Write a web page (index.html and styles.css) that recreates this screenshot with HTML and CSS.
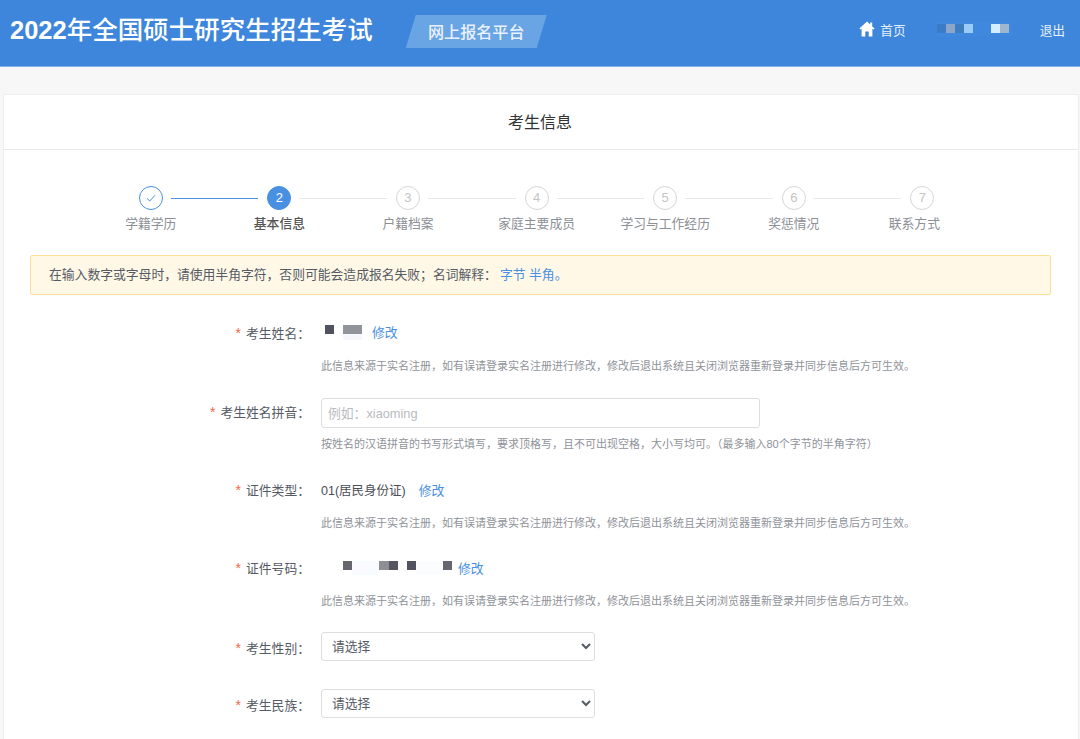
FILE: index.html
```html
<!DOCTYPE html>
<html lang="zh-CN">
<head>
<meta charset="utf-8">
<title>考生信息</title>
<link rel="stylesheet" href="styles.css">
</head>
<body>
<header class="topbar">
  <h1 class="brand"><span class="brand-year">2022</span>年全国硕士研究生招生考试</h1>
  <div class="platform">网上报名平台</div>
  <nav class="topnav">
    <a class="home">
      <svg class="home-icon" viewBox="0 0 16 16" width="16" height="16"><path d="M8 0.6 0.4 7.6 1.5 8.6 2.6 7.7V15.4H6.3V10.4H9.7V15.4H13.4V7.7L14.5 8.6 15.6 7.6 13.2 5.4V1.6H11.2V3.5Z" fill="#fff"/></svg>
      <span>首页</span>
    </a>
    <div class="user-mask">
      <i class="px a"></i><i class="px b"></i><i class="px c"></i><i class="px d"></i><i class="px e"></i><i class="px f"></i><i class="px g"></i><i class="px h"></i>
    </div>
    <a class="logout">退出</a>
  </nav>
</header>

<main class="card">
  <div class="card-title">考生信息</div>
  <div class="card-body">
    <ol class="steps">
      <li class="step done"><span class="dot"><svg viewBox="0 0 12 12" width="12" height="12"><path d="M2 6.4 4.8 9 10 3.2" fill="none" stroke="#4a90e2" stroke-width="1"/></svg></span><span class="step-name">学籍学历</span></li>
      <li class="step active"><span class="dot">2</span><span class="step-name">基本信息</span></li>
      <li class="step"><span class="dot">3</span><span class="step-name">户籍档案</span></li>
      <li class="step"><span class="dot">4</span><span class="step-name">家庭主要成员</span></li>
      <li class="step"><span class="dot">5</span><span class="step-name">学习与工作经历</span></li>
      <li class="step"><span class="dot">6</span><span class="step-name">奖惩情况</span></li>
      <li class="step last"><span class="dot">7</span><span class="step-name">联系方式</span></li>
    </ol>

    <div class="notice">在输入数字或字母时，请使用半角字符，否则可能会造成报名失败；名词解释：<a class="link term">字节 半角</a><span class="link-end">。</span></div>

    <form class="form">
      <div class="row row-name">
        <label class="label"><em>*</em>考生姓名：</label>
        <div class="field">
          <div class="value">
            <span class="mask mask-name"><i class="sq dark"></i><i class="gap10"></i><i class="sq mid wide"></i></span>
            <a class="link">修改</a>
          </div>
          <p class="hint">此信息来源于实名注册，如有误请登录实名注册进行修改，修改后退出系统且关闭浏览器重新登录并同步信息后方可生效。</p>
        </div>
      </div>

      <div class="row row-pinyin">
        <label class="label"><em>*</em>考生姓名拼音：</label>
        <div class="field">
          <input class="input" type="text" placeholder="例如：xiaoming">
          <p class="hint hint-tight">按姓名的汉语拼音的书写形式填写，要求顶格写，且不可出现空格，大小写均可。（最多输入80个字节的半角字符）</p>
        </div>
      </div>

      <div class="row row-type">
        <label class="label"><em>*</em>证件类型：</label>
        <div class="field">
          <div class="value"><span class="plain">01(居民身份证)</span><a class="link">修改</a></div>
          <p class="hint hint-near">此信息来源于实名注册，如有误请登录实名注册进行修改，修改后退出系统且关闭浏览器重新登录并同步信息后方可生效。</p>
        </div>
      </div>

      <div class="row row-id">
        <label class="label"><em>*</em>证件号码：</label>
        <div class="field">
          <div class="value">
            <span class="mask mask-id"><i class="sq mid2"></i><i class="gap-a"></i><i class="sq mid wide2"></i><i class="gap-b"></i><i class="sq dark"></i><i class="gap-c"></i><i class="sq mid2"></i></span>
            <a class="link">修改</a>
          </div>
          <p class="hint hint-near">此信息来源于实名注册，如有误请登录实名注册进行修改，修改后退出系统且关闭浏览器重新登录并同步信息后方可生效。</p>
        </div>
      </div>

      <div class="row row-sex">
        <label class="label"><em>*</em>考生性别：</label>
        <div class="field"><select class="select"><option>请选择</option></select></div>
      </div>

      <div class="row row-nation">
        <label class="label"><em>*</em>考生民族：</label>
        <div class="field"><select class="select"><option>请选择</option></select></div>
      </div>
    </form>
  </div>
</main>
</body>
</html>
```

FILE: styles.css
```css
* { box-sizing: border-box; }
html, body { height: 739px; overflow: hidden; }
body {
  margin: 0;
  background: #f7f7f7;
  color: #555a64;
  font-family: "Liberation Sans", "Noto Sans CJK SC", sans-serif;
  font-size: 12.8px;
}
a { color: inherit; text-decoration: none; }

.topbar {
  height: 67px;
  background: #3d86db;
  border-bottom: 1px solid #82b3ea;
  display: flex;
  align-items: center;
  padding: 0 15px 5px 10px;
  color: #fff;
}
.brand { margin: 0 0 2px; font-size: 25.5px; font-weight: 500; line-height: 34px; white-space: nowrap; }
.brand-year { font-weight: 700; }
.platform {
  margin: 2px 0 0 33px;
  width: 141px;
  height: 33px;
  line-height: 34px;
  text-align: center;
  background: #69a4e4;
  clip-path: polygon(10px 0, 100% 0, 131px 100%, 0 100%);
  font-size: 16.1px;
  font-weight: 500;
  color: #e9f2fc;
}
.topnav { margin: 0 0 3px auto; display: flex; align-items: center; font-size: 12.7px; color: #e6f0fb; }
.home { display: flex; align-items: center; gap: 5px; }
.home-icon { display: block; margin-top: -1px; }
.user-mask {
  display: flex;
  margin: 0 28px 0 31px;
  width: 75px;
  height: 14px;
  background: #3e88dd;
}
.px { display: block; width: 9px; height: 9px; margin-top: 2px; }
.px.a { background: #3a7cc9; }
.px.b { background: #8ba6c8; }
.px.c { background: #3c7dbf; }
.px.d { background: #9accfb; }
.px.e { background: #3e88dd; }
.px.f { background: #3e88dd; }
.px.g { background: #d4edff; }
.px.h { background: #9fb6d0; }

.card {
  margin: 27px 1px 0 3px;
  background: #fff;
  border: 1px solid #eeeeee;
  border-bottom: 0;
  border-radius: 2px 2px 0 0;
}
.card-title {
  height: 55px;
  line-height: 55px;
  padding-right: 2px;
  text-align: center;
  font-size: 16px;
  color: #333;
  border-bottom: 1px solid #e8e8e8;
}
.card-body { padding: 36px 27px 10px 26px; }

.steps {
  list-style: none;
  margin: 0 0 0 56.5px;
  padding: 0;
  display: grid;
  grid-template-columns: repeat(7, 128.6px);
  height: 69px;
}
.step { position: relative; display: flex; flex-direction: column; align-items: center; color: #8c8f96; }
.dot {
  width: 24px;
  height: 24px;
  border-radius: 50%;
  border: 1px solid #d6d6d6;
  color: #c4c4c4;
  font-size: 13px;
  line-height: 22px;
  text-align: center;
  background: #fff;
  display: flex;
  align-items: center;
  justify-content: center;
}
.step + .step::before {
  content: "";
  position: absolute;
  top: 12px;
  left: -44.3px;
  width: 87.6px;
  height: 1px;
  background: #e8e8e8;
}
.step.active::before { background: #4a90e2; }
.step.done .dot { border-color: #4a90e2; }
.step.active .dot { background: #4a90e2; border-color: #4a90e2; color: #fff; }
.step.active .step-name { color: #555; font-weight: 500; }
.step-name { margin-top: 5px; line-height: 18px; white-space: nowrap; }
.step.last .step-name { margin-right: 16px; }

.notice {
  height: 40px;
  line-height: 38px;
  padding-left: 18px;
  background: #fff8e7;
  border: 1px solid #fbe09c;
  border-radius: 2px;
  color: #555a64;
}
.link { color: #4a90e2; }
.term { margin-left: 3px; }
.link-end { color: #4a90e2; }

.form { display: flex; flex-direction: column; }
.row { display: flex; }
.row-name { margin-top: 28px; height: 75px; }
.row-pinyin { height: 83px; }
.row-type { height: 78px; }
.row-id { height: 73px; }
.row-sex { height: 57px; }
.row-nation { height: 50px; }

.label {
  width: 280px;
  flex: none;
  text-align: right;
  line-height: 20px;
  white-space: nowrap;
}
.label em { color: #ee6a4a; font-style: normal; font-size: 14px; margin-right: 5px; }
.row-pinyin .label { padding-top: 4px; }
.row-type .label, .row-id .label { line-height: 18px; }
.row-sex .label, .row-nation .label { padding-top: 6px; }
.field { margin-left: 11px; flex: 1; min-width: 0; }
.value { display: flex; align-items: center; height: 16px; }
.plain { margin-right: 13px; font-size: 12.5px; color: #4a4d55; }
.mask { display: flex; align-items: flex-start; height: 16px; }
.mask i { display: block; flex: none; }
.mask-name { width: 51px; padding-left: 4px; }
.mask-id { width: 137px; padding-left: 22px; }
.sq { width: 9px; height: 9px; margin-top: 2px; }
.dark { background: #50525f; }
.mid { background: #92949b; box-shadow: 0 6px 0 #f5f7fb; }
.mid2 { background: #666670; }
.wide { width: 19px; }
.wide2 { width: 19px; background: linear-gradient(90deg, #8d8e96 50%, #55565f 50%); box-shadow: none; }
.gap10 { width: 9px; }
.gap-a { width: 27px; height: 14px; margin-top: 2px; background: #f7fafe; }
.gap-b { width: 9px; }
.gap-c { width: 27px; height: 14px; margin-top: 2px; background: #fafcfe; }
.hint { margin: 19px 0 0; font-size: 11px; line-height: 16px; color: #8f9299; white-space: nowrap; }
.hint-tight { margin-top: 8px; }
.hint-near { margin-top: 18px; }

.input {
  display: block;
  width: 439px;
  height: 30px;
  padding: 0 6px;
  border: 1px solid #dedede;
  border-radius: 3px;
  background: #fff;
  font: inherit;
  outline: none;
}
.input::placeholder { color: #b9bbc0; }
.select {
  display: block;
  width: 274px;
  height: 29px;
  padding: 0 6px;
  border: 1px solid #dedede;
  border-radius: 3px;
  background: #fff;
  color: #555a64;
  font: inherit;
  outline: none;
}
```
